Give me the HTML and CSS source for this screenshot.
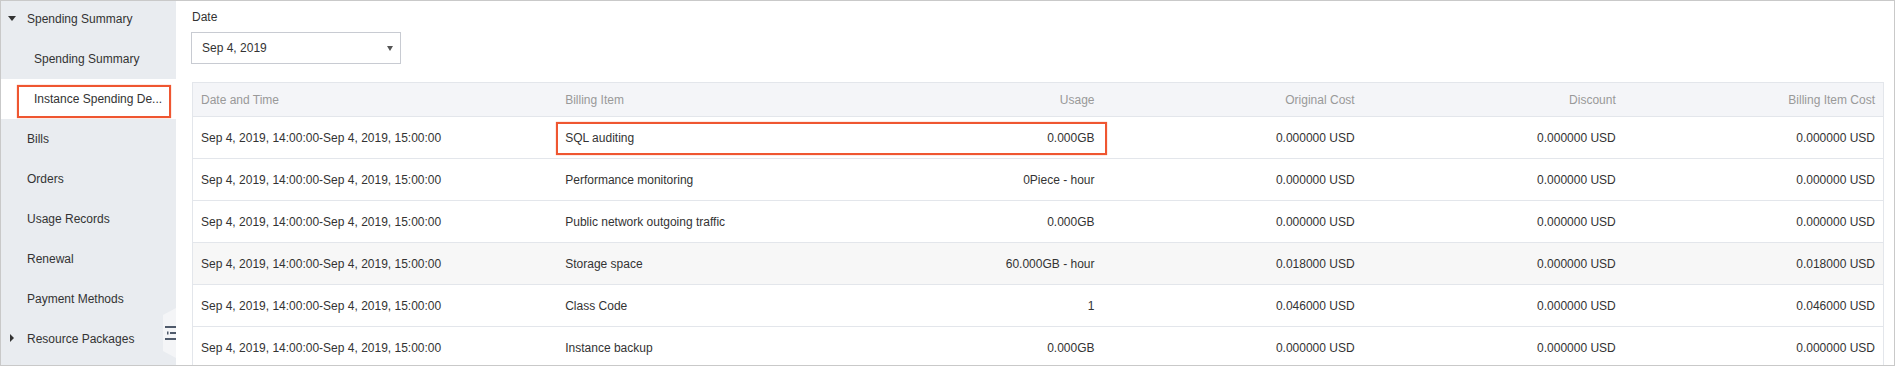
FILE: index.html
```html
<!DOCTYPE html>
<html lang="en">

<head>
  <meta charset="UTF-8">
  <meta name="viewport" content="width=device-width, initial-scale=1.0">
  <title>Instance Spending Details</title>
  <link rel="stylesheet" href="styles.css">
</head>

<body>
  <div class="frame">
    <div class="sidebar">
      <ul class="nav">
        <li class="navItem group open"><span class="arrow down"></span>Spending Summary</li>
        <li class="navItem sub">Spending Summary</li>
        <li class="navItem sub active">Instance Spending De...<div class="mark markNav"></div></li>
        <li class="navItem">Bills</li>
        <li class="navItem">Orders</li>
        <li class="navItem">Usage Records</li>
        <li class="navItem">Renewal</li>
        <li class="navItem">Payment Methods</li>
        <li class="navItem group"><span class="arrow right"></span>Resource Packages</li>
      </ul>
      <div class="collapseTab">
        <svg width="11" height="14" viewBox="0 0 11 14">
          <rect x="0" y="0" width="11" height="2" fill="#4f5a6b"></rect>
          <rect x="2" y="5.5" width="1.5" height="3" fill="#4f5a6b"></rect>
          <rect x="5" y="6" width="6" height="2" fill="#4f5a6b"></rect>
          <rect x="0" y="12" width="11" height="2" fill="#4f5a6b"></rect>
        </svg>
      </div>
    </div>

    <div class="main">
      <div class="fieldLabel">Date</div>
      <div class="select">
        <span>Sep 4, 2019</span>
        <span class="caret"></span>
      </div>

      <div class="tableWrap">
        <table class="bill">
          <colgroup>
            <col class="cTime">
            <col class="cItem">
            <col class="cUsage">
            <col class="cCost">
            <col class="cDiscount">
            <col class="cTotal">
          </colgroup>
          <thead>
            <tr>
              <th>Date and Time</th>
              <th>Billing Item</th>
              <th class="num">Usage</th>
              <th class="num">Original Cost</th>
              <th class="num">Discount</th>
              <th class="num">Billing Item Cost</th>
            </tr>
          </thead>
          <tbody>
            <tr>
              <td>Sep 4, 2019, 14:00:00-Sep 4, 2019, 15:00:00</td>
              <td>SQL auditing</td>
              <td class="num">0.000GB</td>
              <td class="num">0.000000 USD</td>
              <td class="num">0.000000 USD</td>
              <td class="num">0.000000 USD</td>
            </tr>
            <tr>
              <td>Sep 4, 2019, 14:00:00-Sep 4, 2019, 15:00:00</td>
              <td>Performance monitoring</td>
              <td class="num">0Piece - hour</td>
              <td class="num">0.000000 USD</td>
              <td class="num">0.000000 USD</td>
              <td class="num">0.000000 USD</td>
            </tr>
            <tr>
              <td>Sep 4, 2019, 14:00:00-Sep 4, 2019, 15:00:00</td>
              <td>Public network outgoing traffic</td>
              <td class="num">0.000GB</td>
              <td class="num">0.000000 USD</td>
              <td class="num">0.000000 USD</td>
              <td class="num">0.000000 USD</td>
            </tr>
            <tr class="hover">
              <td>Sep 4, 2019, 14:00:00-Sep 4, 2019, 15:00:00</td>
              <td>Storage space</td>
              <td class="num">60.000GB - hour</td>
              <td class="num">0.018000 USD</td>
              <td class="num">0.000000 USD</td>
              <td class="num">0.018000 USD</td>
            </tr>
            <tr>
              <td>Sep 4, 2019, 14:00:00-Sep 4, 2019, 15:00:00</td>
              <td>Class Code</td>
              <td class="num">1</td>
              <td class="num">0.046000 USD</td>
              <td class="num">0.000000 USD</td>
              <td class="num">0.046000 USD</td>
            </tr>
            <tr>
              <td>Sep 4, 2019, 14:00:00-Sep 4, 2019, 15:00:00</td>
              <td>Instance backup</td>
              <td class="num">0.000GB</td>
              <td class="num">0.000000 USD</td>
              <td class="num">0.000000 USD</td>
              <td class="num">0.000000 USD</td>
            </tr>
          </tbody>
        </table>
        <div class="mark markRow"></div>
      </div>
    </div>
  </div>
</body>

</html>
```

FILE: styles.css
```css
html,
body {
  margin: 0;
  height: 100%;
  overflow: hidden;
  background: #fff;
}

body {
  font-family: "Liberation Sans", Arial, sans-serif;
  font-size: 12px;
  color: #333;
}

div.frame {
  box-sizing: border-box;
  width: 1895px;
  height: 366px;
  border: 1px solid #c9c9c9;
  display: flex;
  overflow: hidden;
}

/* left menu */
div.sidebar {
  position: relative;
  flex: 0 0 175px;
  background: #e9ecf0;
}

ul.nav {
  list-style: none;
  margin: -2px 0 0;
  padding: 0;
}

li.navItem {
  position: relative;
  height: 40px;
  line-height: 40px;
  padding-left: 26px;
  white-space: nowrap;
}

li.navItem.sub {
  padding-left: 33px;
}

li.navItem.active {
  background: #fff;
}

span.arrow {
  position: absolute;
  width: 0;
  height: 0;
}

span.arrow.down {
  left: 7px;
  top: 17px;
  border-left: 4.5px solid transparent;
  border-right: 4.5px solid transparent;
  border-top: 5px solid #333;
}

span.arrow.right {
  left: 9px;
  top: 15px;
  border-top: 4.5px solid transparent;
  border-bottom: 4.5px solid transparent;
  border-left: 4px solid #333;
}

div.collapseTab {
  position: absolute;
  right: 0;
  top: 307px;
  width: 13px;
  height: 50px;
  background: #f4f5f7;
  clip-path: polygon(100% 0, 0 14%, 0 86%, 100% 100%);
}

div.collapseTab svg {
  position: absolute;
  left: 2px;
  top: 18px;
}

/* annotation boxes */
div.mark {
  position: absolute;
  box-sizing: border-box;
  border: 2px solid #ef5631;
  box-shadow: 0 0 1px rgba(239, 86, 49, 0.7);
}

div.markNav {
  left: 16px;
  top: 6px;
  width: 154px;
  height: 33px;
}

div.markRow {
  left: 364px;
  top: 40px;
  width: 551px;
  height: 33px;
}

/* content */
div.main {
  flex: 1;
  min-width: 0;
  padding: 8px 10px 0 16px;
}

div.fieldLabel {
  line-height: 16px;
  margin-bottom: 7px;
}

div.select {
  box-sizing: border-box;
  width: 210px;
  height: 32px;
  margin-left: -1px;
  border: 1px solid #c8cbd2;
  display: flex;
  align-items: center;
  justify-content: space-between;
  padding: 0 7px 0 10px;
}

span.caret {
  width: 0;
  height: 0;
  border-left: 3.5px solid transparent;
  border-right: 3.5px solid transparent;
  border-top: 5px solid #555;
}

div.tableWrap {
  position: relative;
  margin-top: 18px;
}

table.bill {
  width: 100%;
  table-layout: fixed;
  border-collapse: separate;
  border-spacing: 0;
  border: 1px solid #e3e6eb;
  border-bottom: 0;
}

col.cTime { width: 364px; }
col.cItem { width: 284px; }
col.cUsage { width: 261px; }
col.cCost { width: 260px; }
col.cDiscount { width: 261px; }
col.cTotal { width: 259px; }

table.bill th,
table.bill td {
  padding: 0 8px;
  text-align: left;
  white-space: nowrap;
  overflow: hidden;
  border-bottom: 1px solid #e3e6eb;
}

table.bill th {
  height: 33px;
  font-weight: normal;
  color: #999;
  background: #f4f5f8;
}

table.bill td {
  height: 41px;
}

table.bill .num {
  text-align: right;
}

table.bill tr.hover td {
  background: #f7f7f7;
}
```
